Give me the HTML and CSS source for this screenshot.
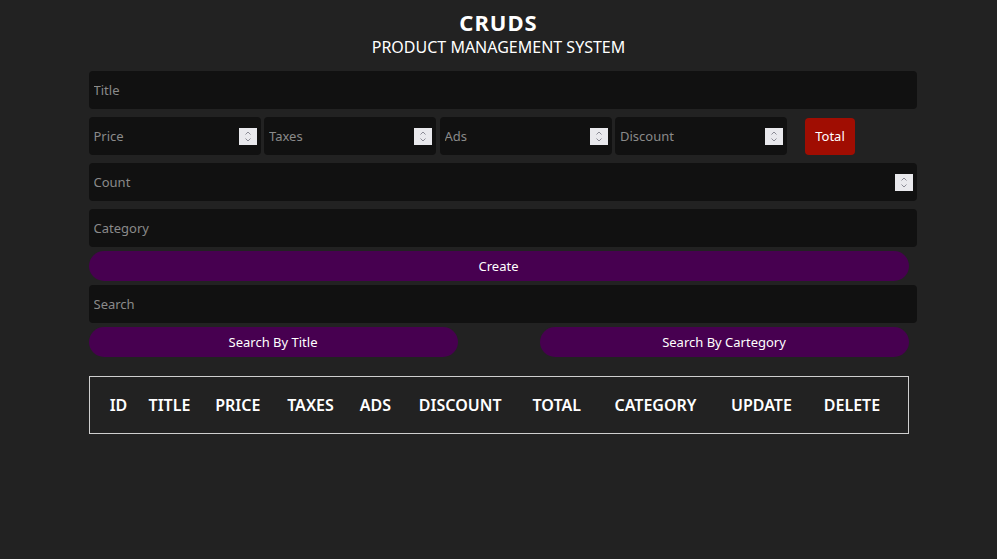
FILE: index.html
```html
<!DOCTYPE html>
<html>
<head>
<meta charset="utf-8">
<link rel="stylesheet" href="styles.css">
</head>
<body>
<div class="crud">
  <div class="head">
    <h2>CRUDS</h2>
    <p>PRODUCT MANAGEMENT SYSTEM</p>
  </div>
  <div class="inputs">
    <input class="field" type="text" placeholder="Title">
    <div class="price">
      <label class="numbox small">
        <input type="number" placeholder="Price">
        <span class="spin"><svg width="18" height="17" viewBox="0 0 18 17"><path d="M6.5 6.5 9 4l2.5 2.5M6.5 10.5 9 13l2.5-2.5" fill="none" stroke="#8c8c96" stroke-width="1"/></svg></span>
      </label>
      <label class="numbox small">
        <input type="number" placeholder="Taxes">
        <span class="spin"><svg width="18" height="17" viewBox="0 0 18 17"><path d="M6.5 6.5 9 4l2.5 2.5M6.5 10.5 9 13l2.5-2.5" fill="none" stroke="#8c8c96" stroke-width="1"/></svg></span>
      </label>
      <label class="numbox small">
        <input type="number" placeholder="Ads">
        <span class="spin"><svg width="18" height="17" viewBox="0 0 18 17"><path d="M6.5 6.5 9 4l2.5 2.5M6.5 10.5 9 13l2.5-2.5" fill="none" stroke="#8c8c96" stroke-width="1"/></svg></span>
      </label>
      <label class="numbox small">
        <input type="number" placeholder="Discount">
        <span class="spin"><svg width="18" height="17" viewBox="0 0 18 17"><path d="M6.5 6.5 9 4l2.5 2.5M6.5 10.5 9 13l2.5-2.5" fill="none" stroke="#8c8c96" stroke-width="1"/></svg></span>
      </label>
      <small class="total">Total</small>
    </div>
    <label class="numbox wide">
      <input type="number" placeholder="Count">
      <span class="spin"><svg width="18" height="17" viewBox="0 0 18 17"><path d="M6.5 6.5 9 4l2.5 2.5M6.5 10.5 9 13l2.5-2.5" fill="none" stroke="#8c8c96" stroke-width="1"/></svg></span>
    </label>
    <input class="field" type="text" placeholder="Category">
    <button class="btn create">Create</button>
  </div>
  <div class="search-block">
    <input class="field" type="text" placeholder="Search">
    <div class="btn-search">
      <button class="btn half">Search By Title</button>
      <button class="btn half">Search By Cartegory</button>
    </div>
  </div>
  <div class="outputs">
    <table>
      <tr>
        <th>ID</th>
        <th>TITLE</th>
        <th>PRICE</th>
        <th>TAXES</th>
        <th>ADS</th>
        <th>DISCOUNT</th>
        <th>TOTAL</th>
        <th>CATEGORY</th>
        <th>UPDATE</th>
        <th>DELETE</th>
      </tr>
    </table>
  </div>
</div>
</body>
</html>
```
FILE: styles.css
```css
* { box-sizing: border-box; }
html, body {
  margin: 0;
  padding: 0;
  background: #222222;
  color: #ffffff;
  font-family: "Noto Sans", "DejaVu Sans", sans-serif;
}
.crud {
  width: 820px;
  margin: 0 auto;
  padding-top: 8px;
}
.head {
  text-align: center;
}
.head h2 {
  margin: 0;
  font-size: 22px;
  line-height: 28px;
  font-weight: 700;
  letter-spacing: 1px;
}
.head p {
  margin: 0;
  font-size: 16px;
  line-height: 22px;
  font-weight: 400;
}
.inputs {
  margin-top: 13px;
  display: flex;
  flex-direction: column;
}
.field,
.numbox {
  display: block;
  width: 828px;
  height: 38px;
  padding: 4px 4px 4px 5px;
  border: none;
  outline: none;
  background: #111111;
  color: #ffffff;
  border-radius: 4px;
  margin: 0 0 8px 0;
  font-family: inherit;
  font-size: 13px;
}
.field::placeholder,
.numbox input::placeholder { color: #8a8a8a; }
.numbox {
  display: flex;
  align-items: center;
}
.numbox input {
  flex: 1;
  min-width: 0;
  height: 100%;
  border: none;
  outline: none;
  background: transparent;
  color: #ffffff;
  padding: 0;
  font-family: inherit;
  font-size: 13px;
  -moz-appearance: textfield;
}
.numbox input::-webkit-inner-spin-button,
.numbox input::-webkit-outer-spin-button {
  -webkit-appearance: none;
  margin: 0;
}
.spin {
  flex: none;
  width: 18px;
  height: 17px;
  background: #e9e9ed;
  display: block;
}
.spin svg { display: block; }
.price {
  display: flex;
  align-items: center;
  gap: 3.5px;
  margin-bottom: 8px;
}
.price .numbox {
  width: 172px;
  margin: 0;
}
.total {
  margin-left: 14.5px;
  width: 50px;
  height: 37px;
  background: #a00d02;
  border-radius: 4px;
  color: #ffffff;
  font-size: 13px;
  display: flex;
  align-items: center;
  justify-content: center;
}
.btn {
  height: 30px;
  border: none;
  border-radius: 20px;
  background: #470050;
  color: #ffffff;
  font-family: inherit;
  font-size: 13px;
  cursor: pointer;
  padding: 0;
}
.create {
  width: 820px;
  margin-top: -4px;
}
.search-block {
  margin-top: 4px;
}
.btn-search {
  display: flex;
  justify-content: space-between;
  margin-top: -4px;
}
.half { width: 369px; }
.outputs {
  margin-top: 19px;
}
table {
  width: 820px;
  table-layout: fixed;
  border: 1px solid #cfcfcf;
  border-spacing: 2px;
  text-align: center;
}
th {
  padding: 15px 0;
  font-size: 16px;
  line-height: 22px;
  font-weight: 600;
  white-space: nowrap;
}
th:nth-child(1) { width: 54px; }
th:nth-child(2) { width: 44px; }
th:nth-child(3) { width: 88.6px; }
th:nth-child(4) { width: 52.8px; }
th:nth-child(5) { width: 73.2px; }
th:nth-child(6) { width: 92.2px; }
th:nth-child(7) { width: 97px; }
th:nth-child(8) { width: 96.4px; }
th:nth-child(9) { width: 111.6px; }
th:nth-child(10) { width: 86.2px; padding-right: 20.8px; }
```
